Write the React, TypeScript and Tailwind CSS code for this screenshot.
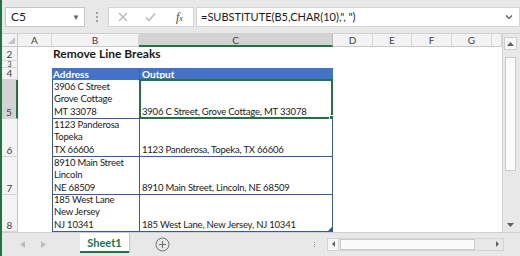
import React from 'react';

const cols = [
  { key: 'A', w: 'w-[34px]' },
  { key: 'B', w: 'w-[87px]' },
  { key: 'C', w: 'w-[194px]' },
  { key: 'D', w: 'w-[40px]' },
  { key: 'E', w: 'w-[39px]' },
  { key: 'F', w: 'w-[40px]' },
  { key: 'G', w: 'w-[40px]' },
  { key: '', w: 'flex-1' },
];

const rows = [
  { address: ['3906 C Street', 'Grove Cottage', 'MT 33078'], output: '3906 C Street, Grove Cottage, MT 33078', h: 'h-[39px]', n: 5 },
  { address: ['1123 Panderosa', 'Topeka', 'TX 66606'], output: '1123 Panderosa, Topeka, TX 66606', h: 'h-[38px]', n: 6 },
  { address: ['8910 Main Street', 'Lincoln', 'NE 68509'], output: '8910 Main Street, Lincoln, NE 68509', h: 'h-[38px]', n: 7 },
  { address: ['185 West Lane', 'New Jersey', 'NJ 10341'], output: '185 West Lane, New Jersey, NJ 10341', h: 'h-[37px]', n: 8 },
];

function RowHead({ n, h, active, small }: { n: number; h: string; active?: boolean; small?: boolean }) {
  return (
    <div
      className={`w-[16px] ${h} shrink-0 flex items-end justify-center overflow-hidden text-[#444] border-b border-[#d4d4d4] ${
        small ? 'text-[7px] leading-[6px]' : 'text-[10px] leading-[12px]'
      } ${active ? 'bg-[#d3d3d3] border-r-2 border-r-[#217346]' : 'bg-[#f3f3f3] border-r border-r-[#c8c8c8]'}`}
    >
      {n}
    </div>
  );
}

function BlankCells({ from }: { from: number }) {
  return (
    <>
      {cols.slice(from).map((c, i) => (
        <div key={i} className={`${c.w} shrink-0 bg-white`} />
      ))}
    </>
  );
}

export default function App() {
  return (
    <div className="w-[520px] h-[256px] flex flex-col bg-[#e8e8e8] border-l-2 border-[#217346] overflow-hidden font-['Lato','Open_Sans',sans-serif] text-[#1a1a1a]">
      {/* formula bar */}
      <div className="h-[34px] shrink-0 flex items-start pt-[7px] pl-[3px] border-b border-[#d0d0d0]">
        <div className="w-[80px] h-[20px] bg-white border border-[#c6c6c6] flex items-center justify-between pl-[5px] pr-[4px] text-[12px]">
          <span>C5</span>
          <span className="text-[8px] text-[#666]">▼</span>
        </div>
        <div className="w-[23px] h-[20px] flex flex-col items-center justify-center gap-[2px]">
          <span className="w-[2px] h-[2px] bg-[#a0a0a0]" />
          <span className="w-[2px] h-[2px] bg-[#a0a0a0]" />
          <span className="w-[2px] h-[2px] bg-[#a0a0a0]" />
        </div>
        <div className="w-[86px] h-[20px] bg-white border border-[#d4d4d4] flex items-center pl-[9px] gap-[17px]">
          <svg width="10" height="10" viewBox="0 0 10 10" className="shrink-0">
            <path d="M1 1L9 9M9 1L1 9" stroke="#b5b5b5" strokeWidth="1.2" fill="none" />
          </svg>
          <svg width="11" height="10" viewBox="0 0 11 10" className="shrink-0">
            <path d="M1 5.5L4 8.5L10 1.5" stroke="#b5b5b5" strokeWidth="1.3" fill="none" />
          </svg>
          <span className="ml-[3px] font-['Liberation_Serif',serif] italic text-[12px] text-[#444] leading-none">
            f<span className="text-[8px]">x</span>
          </span>
        </div>
        <div className="ml-[2px] flex-1 h-[20px] bg-white border border-[#d4d4d4] flex items-center justify-between pl-[4px] pr-[6px] text-[11px]">
          <span>=SUBSTITUTE(B5,CHAR(10),", ")</span>
          <svg width="8" height="6" viewBox="0 0 8 6">
            <path d="M1 1.5L4 4.5L7 1.5" stroke="#555" strokeWidth="1.2" fill="none" />
          </svg>
        </div>
      </div>

      {/* sheet */}
      <div className="h-[198px] shrink-0 flex">
        <div className="w-[500px] flex flex-col bg-white">
          {/* column headers */}
          <div className="h-[13px] flex shrink-0">
            <div className="w-[16px] shrink-0 bg-[#f3f3f3] border-r border-b border-[#c8c8c8] relative">
              <svg width="7" height="7" viewBox="0 0 7 7" className="absolute right-[2px] bottom-[2px]">
                <path d="M7 0V7H0Z" fill="#c4c4c4" />
              </svg>
            </div>
            {cols.map((c) => (
              <div
                key={c.key || 'x'}
                className={`${c.w} shrink-0 flex items-center justify-center text-[10px] leading-none text-[#444] ${
                  c.key === 'C'
                    ? 'bg-[#d3d3d3] border-b-2 border-[#217346] border-r border-r-[#b8b8b8]'
                    : 'bg-[#f3f3f3] border-b border-[#c8c8c8] border-r border-r-[#d8d8d8]'
                }`}
              >
                {c.key}
              </div>
            ))}
          </div>

          {/* row 2 */}
          <div className="h-[14px] flex shrink-0">
            <RowHead n={2} h="h-[14px]" />
            <div className="w-[34px] shrink-0" />
            <div className="w-[87px] shrink-0 pl-[1px] flex items-end">
              <span className="text-[12px] font-bold leading-[14px] whitespace-nowrap">Remove Line Breaks</span>
            </div>
          </div>

          {/* row 3 */}
          <div className="h-[7px] flex shrink-0">
            <RowHead n={3} h="h-[7px]" small />
          </div>

          {/* row 4 header */}
          <div className="h-[12px] flex shrink-0">
            <RowHead n={4} h="h-[12px]" />
            <div className="w-[34px] shrink-0" />
            <div className="w-[87px] shrink-0 bg-[#4472c4] text-white font-bold text-[10px] leading-[12px] pl-[1px]">Address</div>
            <div className="w-[194px] shrink-0 bg-[#4472c4] text-white font-bold text-[10px] leading-[12px] pl-[2px] border-l border-[#3a62a8]">Output</div>
            <BlankCells from={3} />
          </div>

          {/* data rows */}
          {rows.map((r) => (
            <div key={r.n} className={`${r.h} flex shrink-0`}>
              <RowHead n={r.n} h={r.h} active={r.n === 5} />
              <div className="w-[34px] shrink-0" />
              <div className="w-[87px] shrink-0 border-l border-b border-[#3b5a9a] pl-[1px] flex flex-col justify-end text-[9.5px] tracking-[-0.2px] leading-[12.5px] whitespace-nowrap overflow-hidden">
                {r.address.map((l) => (
                  <span key={l}>{l}</span>
                ))}
              </div>
              <div className="w-[194px] shrink-0 border-l border-r border-b border-[#3b5a9a] pl-[2px] flex items-end text-[9.5px] tracking-[-0.2px] leading-[12.5px] whitespace-nowrap relative">
                {r.output}
                {r.n === 5 && (
                  <div className="absolute -left-[1px] -top-[1px] -right-[1px] -bottom-[1px] border-2 border-[#217346]">
                    <div className="absolute -right-[3px] -bottom-[3px] w-[5px] h-[5px] bg-[#217346] border border-white" />
                  </div>
                )}
                {r.n === 8 && (
                  <svg width="4" height="4" viewBox="0 0 4 4" className="absolute right-[0px] bottom-[0px]">
                    <path d="M4 0V4H0Z" fill="#2f5597" />
                  </svg>
                )}
              </div>
              <BlankCells from={3} />
            </div>
          ))}
        </div>

        {/* vertical scrollbar */}
        <div className="w-[16px] shrink-0 bg-[#e8e8e8] flex flex-col items-center pt-[3px] pb-[2px] border-l border-[#d0d0d0]">
          <div className="w-[13px] h-[13px] bg-[#f7f7f7] border border-[#cfcfcf] flex items-center justify-center">
            <svg width="7" height="4" viewBox="0 0 7 4">
              <path d="M0 4L3.5 0L7 4Z" fill="#606060" />
            </svg>
          </div>
          <div className="mt-[7px] w-[11px] h-[114px] bg-[#fbfbfb] border border-[#cacaca]" />
          <div className="flex-1" />
          <div className="w-[13px] h-[11px] flex items-center justify-center">
            <svg width="7" height="4" viewBox="0 0 7 4">
              <path d="M0 0L3.5 4L7 0Z" fill="#606060" />
            </svg>
          </div>
        </div>
      </div>

      {/* sheet tabs */}
      <div className="h-[24px] shrink-0 flex items-start border-t border-[#cfcfcf]">
        <div className="w-[78px] h-[22px] flex items-center pl-[18px] gap-[16px]">
          <svg width="5" height="7" viewBox="0 0 5 7">
            <path d="M5 0V7L0 3.5Z" fill="#bdbdbd" />
          </svg>
          <svg width="5" height="7" viewBox="0 0 5 7">
            <path d="M0 0V7L5 3.5Z" fill="#bdbdbd" />
          </svg>
        </div>
        <div className="w-[49px] h-[20px] bg-white border-b-2 border-[#217346] shadow-[1px_0_1px_rgba(0,0,0,0.15)] flex items-center justify-center">
          <span className="text-[11px] font-bold text-[#217346] leading-[13px]">Sheet1</span>
        </div>
        <div className="w-[70px] h-[22px] flex items-center pl-[26px]">
          <svg width="15" height="15" viewBox="0 0 15 15">
            <circle cx="7.5" cy="7.5" r="6.5" stroke="#707070" strokeWidth="1" fill="none" />
            <path d="M7.5 4V11M4 7.5H11" stroke="#707070" strokeWidth="1.1" />
          </svg>
        </div>
        <div className="flex-1 h-[22px] flex items-center justify-end pr-[16px]">
          <div className="flex flex-col gap-[1px] mr-[12px]">
            <span className="w-[1px] h-[1px] bg-[#999]" />
            <span className="w-[1px] h-[1px] bg-[#999]" />
            <span className="w-[1px] h-[1px] bg-[#999]" />
          </div>
          <div className="w-[177px] h-[13px] flex items-center bg-[#e8e8e8] border border-[#d4d4d4]">
            <div className="w-[11px] h-full flex items-center justify-center border-r border-[#d4d4d4] bg-[#f6f6f6]">
              <svg width="3" height="6" viewBox="0 0 3 6">
                <path d="M3 0V6L0 3Z" fill="#606060" />
              </svg>
            </div>
            <div className="ml-[1px] w-[135px] h-[11px] bg-[#fbfbfb] border border-[#cacaca]" />
            <div className="flex-1" />
            <div className="w-[11px] h-full flex items-center justify-center">
              <svg width="3" height="6" viewBox="0 0 3 6">
                <path d="M0 0V6L3 3Z" fill="#606060" />
              </svg>
            </div>
          </div>
        </div>
      </div>
    </div>
  );
}
